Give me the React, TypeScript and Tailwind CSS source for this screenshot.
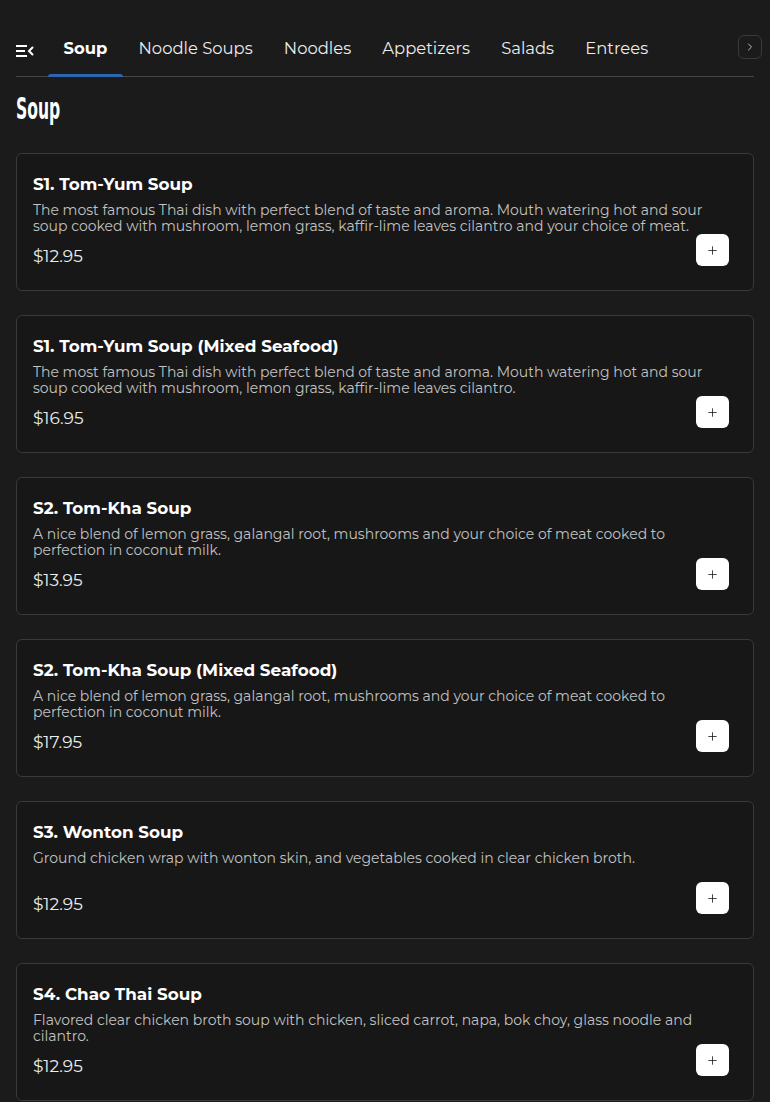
import { ChevronRight, Plus } from "lucide-react";

type Dish = {
  name: string;
  description: string;
  price: string;
};

const tabs = ["Soup", "Noodle Soups", "Noodles", "Appetizers", "Salads", "Entrees"];

const dishes: Dish[] = [
  {
    name: "S1. Tom-Yum Soup",
    description:
      "The most famous Thai dish with perfect blend of taste and aroma. Mouth watering hot and sour soup cooked with mushroom, lemon grass, kaffir-lime leaves cilantro and your choice of meat.",
    price: "$12.95",
  },
  {
    name: "S1. Tom-Yum Soup (Mixed Seafood)",
    description:
      "The most famous Thai dish with perfect blend of taste and aroma. Mouth watering hot and sour soup cooked with mushroom, lemon grass, kaffir-lime leaves cilantro.",
    price: "$16.95",
  },
  {
    name: "S2. Tom-Kha Soup",
    description:
      "A nice blend of lemon grass, galangal root, mushrooms and your choice of meat cooked to perfection in coconut milk.",
    price: "$13.95",
  },
  {
    name: "S2. Tom-Kha Soup (Mixed Seafood)",
    description:
      "A nice blend of lemon grass, galangal root, mushrooms and your choice of meat cooked to perfection in coconut milk.",
    price: "$17.95",
  },
  {
    name: "S3. Wonton Soup",
    description: "Ground chicken wrap with wonton skin, and vegetables cooked in clear chicken broth.",
    price: "$12.95",
  },
  {
    name: "S4. Chao Thai Soup",
    description:
      "Flavored clear chicken broth soup with chicken, sliced carrot, napa, bok choy, glass noodle and cilantro.",
    price: "$12.95",
  },
];

function MenuFoldIcon() {
  return (
    <svg width="18" height="14" viewBox="0 0 18 14" fill="none" stroke="white" strokeWidth="2" strokeLinecap="butt">
      <path d="M0 2h11M0 7h9M0 12h11" />
      <path d="M16.5 3.5 13 7l3.5 3.5" strokeLinecap="round" />
    </svg>
  );
}

function DishCard({ dish }: { dish: Dish }) {
  return (
    <div className="relative rounded-md border border-[#3a3a3a] bg-[#171717] pl-4 pr-4 pt-4 pb-5">
      <h3 className="text-[16.8px] font-bold leading-7 text-white">{dish.name}</h3>
      <p className="mt-1 min-h-8 text-[14px] leading-4 text-[#c2c2c2]">{dish.description}</p>
      <p className="mt-2 text-[17px] leading-7 text-[#ededed]">{dish.price}</p>
      <button className="absolute right-6 bottom-6 flex h-8 w-[33px] items-center justify-center rounded-md bg-white text-[#1c1c1c]">
        <Plus size={13} strokeWidth={1.5} />
      </button>
    </div>
  );
}

export default function App() {
  return (
    <div
      className="min-h-screen bg-[#1b1b1b] px-4 text-white"
      style={{ fontFamily: "Montserrat, 'Open Sans', sans-serif" }}
    >
      {/* Category tabs */}
      <nav className="relative flex items-end border-b border-[#474747]">
        <button className="mr-[14px] flex h-[56px] items-center pt-[6px]">
          <MenuFoldIcon />
        </button>
        <div className="flex">
          {tabs.map((tab, i) => (
            <button
              key={tab}
              className={`relative px-[15.6px] pt-[36px] pb-[16px] text-[16.4px] leading-6 ${
                i === 0 ? "font-bold text-white" : "text-[#ececec]"
              }`}
            >
              {tab}
              {i === 0 && (
                <span className="absolute right-0 -bottom-px left-0 h-[3px] rounded-t-md bg-[#2a67b0]" />
              )}
            </button>
          ))}
        </div>
        <button className="absolute top-[35px] -right-2 flex h-6 w-6 items-center justify-center rounded-md border border-[#3a3a3a] text-[#bdbdbd]">
          <ChevronRight size={12} strokeWidth={2} />
        </button>
      </nav>

      <h2
        className="mt-[13px] mb-[27px] origin-left scale-x-[0.56] text-[31px] leading-9 font-bold text-white"
        style={{ fontFamily: "'Liberation Sans Narrow', 'DejaVu Sans Condensed', sans-serif" }}
      >
        Soup
      </h2>

      <div className="flex flex-col gap-6 pb-6">
        {dishes.map((dish) => (
          <DishCard key={dish.name + dish.price} dish={dish} />
        ))}
      </div>
    </div>
  );
}
